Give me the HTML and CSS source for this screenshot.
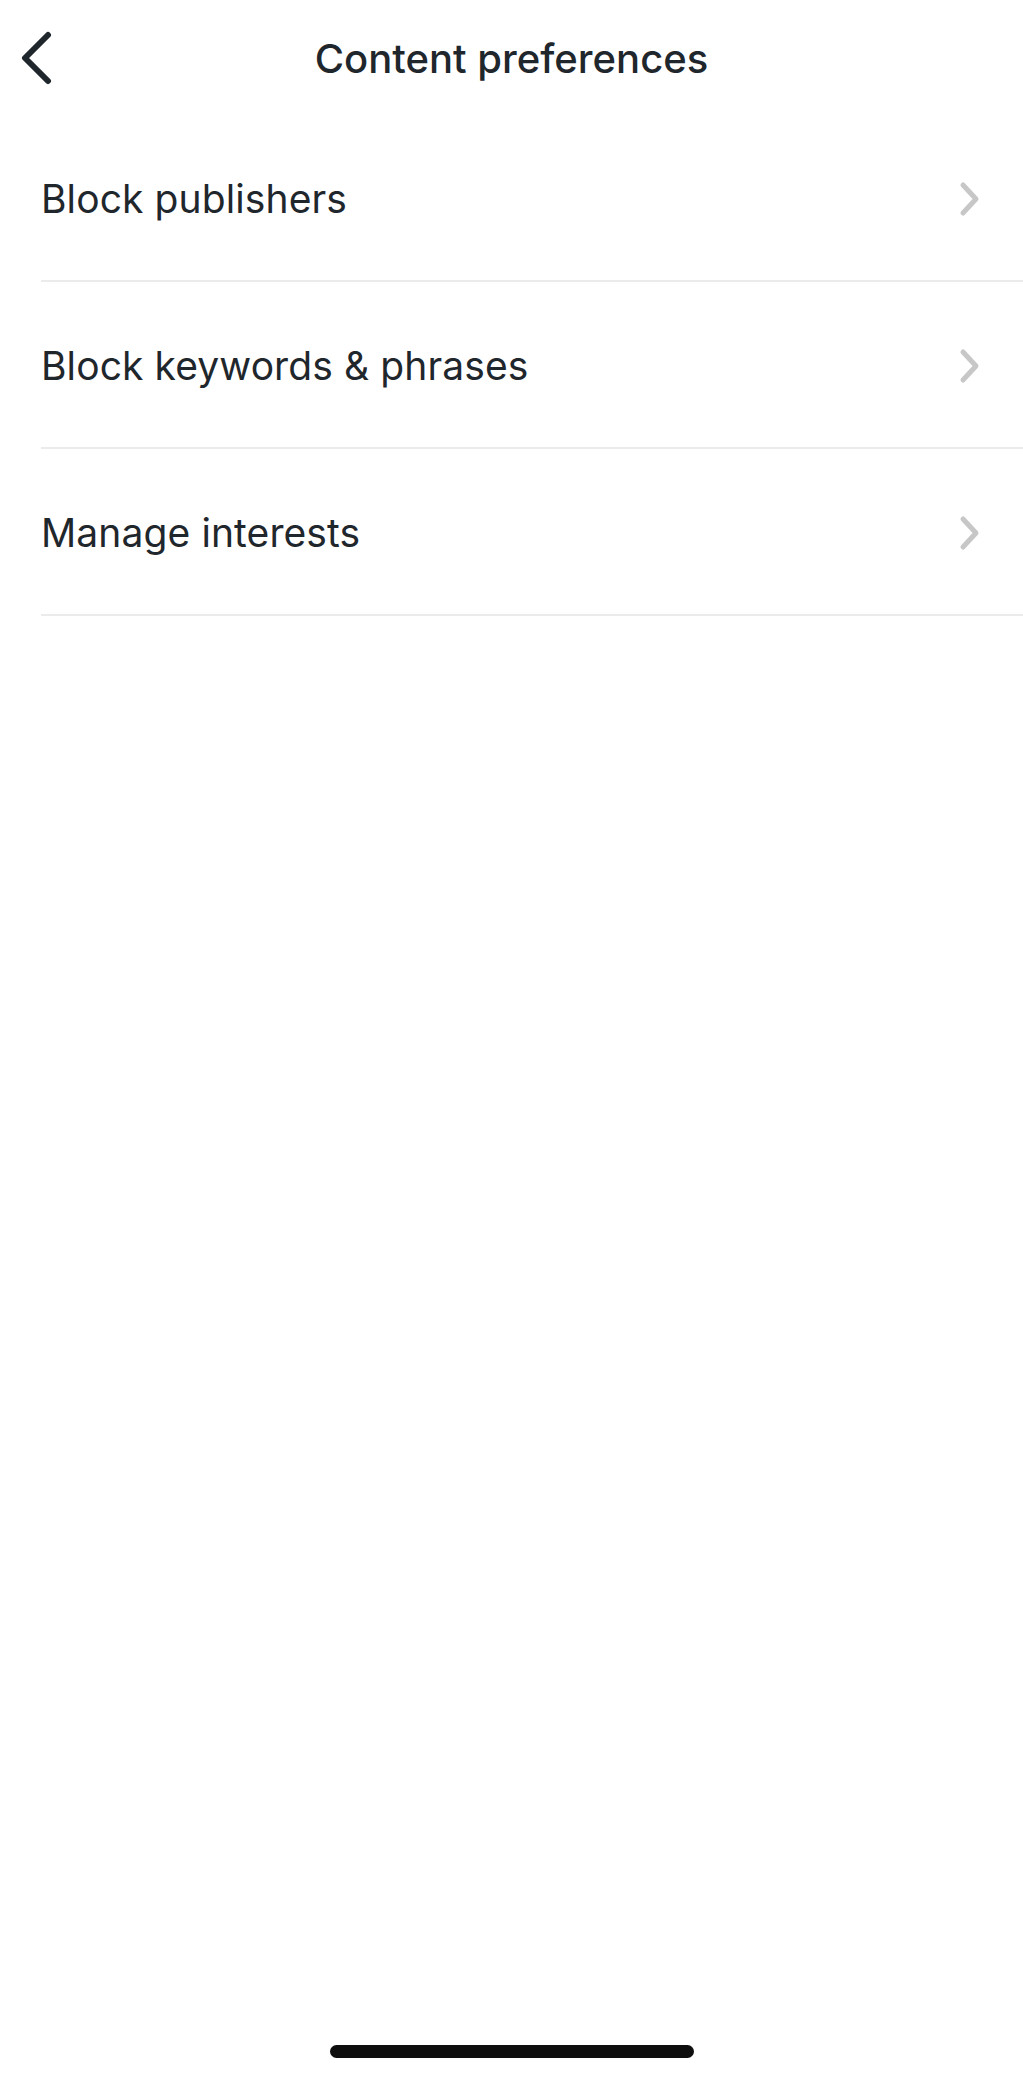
FILE: index.html
```html
<!DOCTYPE html>
<html lang="en">

<head>
  <meta charset="UTF-8" />
  <meta name="viewport" content="width=device-width, initial-scale=1.0" />
  <title>Content preferences</title>
  <link rel="stylesheet" href="styles.css">
</head>

<body>
  <div class="screen">
    <header class="topbar">
      <button class="back" aria-label="Back">
        <svg width="34" height="54" viewBox="0 0 34 54">
          <polyline points="28,4 5,27 28,50" fill="none" stroke="#1f272d" stroke-width="6" stroke-linecap="round" stroke-linejoin="round" />
        </svg>
      </button>
      <h1>Content preferences</h1>
    </header>

    <ul class="menu">
      <li class="menu-item">
        <span>Block publishers</span>
        <svg class="chev" width="24" height="36" viewBox="0 0 24 36">
          <polyline points="5,4 18,18 5,32" fill="none" stroke="#c7c7c7" stroke-width="5" stroke-linecap="round" stroke-linejoin="round" />
        </svg>
      </li>
      <li class="menu-item">
        <span>Block keywords &amp; phrases</span>
        <svg class="chev" width="24" height="36" viewBox="0 0 24 36">
          <polyline points="5,4 18,18 5,32" fill="none" stroke="#c7c7c7" stroke-width="5" stroke-linecap="round" stroke-linejoin="round" />
        </svg>
      </li>
      <li class="menu-item">
        <span>Manage interests</span>
        <svg class="chev" width="24" height="36" viewBox="0 0 24 36">
          <polyline points="5,4 18,18 5,32" fill="none" stroke="#c7c7c7" stroke-width="5" stroke-linecap="round" stroke-linejoin="round" />
        </svg>
      </li>
    </ul>

    <div class="spacer"></div>

    <div class="home-bar"></div>
  </div>
</body>

</html>
```

FILE: styles.css
```css
:root {
  --text: #1f272d;
  --line: #ebebeb;
  --bg: #ffffff;
}

* {
  margin: 0;
  padding: 0;
  box-sizing: border-box;
}

body {
  font-family: Inter, "Noto Sans", sans-serif;
  background-color: var(--bg);
  color: var(--text);
}

.screen {
  display: flex;
  flex-direction: column;
  min-height: 2079px;
}

.topbar {
  position: relative;
  height: 115px;
  display: flex;
  align-items: center;
  justify-content: center;
}

.back {
  position: absolute;
  left: 20px;
  top: 31px;
  background: none;
  border: none;
  display: flex;
}

h1 {
  font-size: 40px;
  font-weight: 500;
  letter-spacing: 0;
  margin-top: 2px;
}

.menu {
  list-style: none;
  padding-left: 41px;
}

.menu-item {
  height: 167px;
  display: flex;
  align-items: center;
  justify-content: space-between;
  padding-top: 2px;
  padding-right: 41px;
  border-bottom: 2px solid var(--line);
  font-size: 39px;
  font-weight: 400;
  letter-spacing: 0.1px;
}

.chev {
  flex-shrink: 0;
}

.spacer {
  flex-grow: 1;
}

.home-bar {
  align-self: center;
  width: 364px;
  height: 13px;
  border-radius: 7px;
  background-color: #0e0e0e;
  margin-bottom: 21px;
}
```
